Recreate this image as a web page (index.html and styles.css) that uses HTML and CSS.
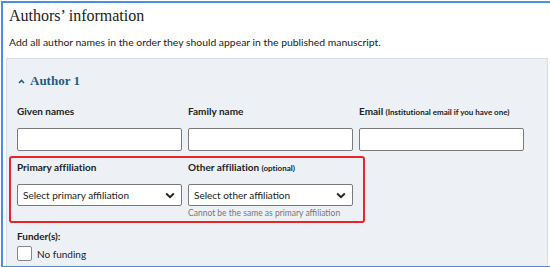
FILE: index.html
```html
<!DOCTYPE html>
<html lang="en">
<head>
    <meta charset="UTF-8">
    <meta name="viewport" content="width=device-width, initial-scale=1.0">
    <title>Authors' information</title>
    <link rel="stylesheet" href="styles.css">
</head>
<body>
    <div class="frame">
        <h2 class="page-title">Authors’ information</h2>
        <p class="intro">Add all author names in the order they should appear in the published manuscript.</p>

        <div class="author-panel">
            <h3 class="author-title">
                <svg class="caret" width="7" height="5" viewBox="0 0 7 5"><path d="M1 4 L3.5 1.5 L6 4" fill="none" stroke="currentColor" stroke-width="1.6"/></svg>
                Author 1
            </h3>

            <div class="field-row">
                <div class="field">
                    <label for="given">Given names</label>
                    <input type="text" id="given">
                </div>
                <div class="field">
                    <label for="family">Family name</label>
                    <input type="text" id="family">
                </div>
                <div class="field">
                    <label for="email">Email <small>(Institutional email if you have one)</small></label>
                    <input type="text" id="email">
                </div>
            </div>

            <div class="field-row affil-row">
                <div class="highlight"></div>
                <div class="field">
                    <label for="primary">Primary affiliation</label>
                    <div class="select">
                        <span>Select primary affiliation</span>
                        <svg width="10" height="7" viewBox="0 0 10 7"><path d="M1.2 1.5 L5 5.2 L8.8 1.5" fill="none" stroke="#222" stroke-width="1.9"/></svg>
                    </div>
                </div>
                <div class="field">
                    <label for="other">Other affiliation <small>(optional)</small></label>
                    <div class="select">
                        <span>Select other affiliation</span>
                        <svg width="10" height="7" viewBox="0 0 10 7"><path d="M1.2 1.5 L5 5.2 L8.8 1.5" fill="none" stroke="#222" stroke-width="1.9"/></svg>
                    </div>
                    <div class="hint">Cannot be the same as primary affiliation</div>
                </div>
            </div>

            <div class="funders">
                <div class="funders-label">Funder(s):</div>
                <label class="check"><span class="box"></span>No funding</label>
            </div>
        </div>
    </div>
</body>
</html>
```

FILE: styles.css
```css
html, body {
    margin: 0;
    background-color: #fff;
}
body {
    font-family: Lato, "Noto Sans", sans-serif;
    color: #222;
    overflow: hidden;
}
.frame {
    margin: 1px;
    width: 542px;
    height: 263px;
    border: 2px solid #4a90dc;
    padding: 0 3px;
    overflow: hidden;
}
.page-title {
    font-family: "Liberation Serif", serif;
    font-weight: normal;
    font-size: 16px;
    margin: 3px 0 0 3px;
    line-height: 20px;
    color: #222;
}
.intro {
    font-size: 10.4px;
    margin: 10px 0 0 3px;
    line-height: 12px;
}
.author-panel {
    margin-top: 10px;
    background-color: #edf1f5;
    border: 1px solid #d5dde5;
    padding: 14px 10px 20px;
}
.author-title {
    margin: 0;
    font-family: "Liberation Serif", serif;
    font-size: 13px;
    line-height: 16px;
    color: #1f5c86;
    display: flex;
    align-items: center;
    gap: 5px;
    padding-left: 1px;
}
.field-row {
    display: grid;
    grid-template-columns: repeat(3, 165px);
    column-gap: 6px;
    margin-top: 16px;
}
.field label {
    display: block;
    font-size: 10px;
    font-weight: bold;
    height: 12px;
    line-height: 12px;
    margin-bottom: 11px;
    font-variant-ligatures: none;
}
.field label small {
    font-size: 8px;
    line-height: 1;
}
.field input {
    display: block;
    box-sizing: border-box;
    width: 100%;
    height: 23px;
    margin: 0;
    border: 1px solid #7a7a7a;
    border-radius: 2px;
    background-color: #fff;
}
.affil-row {
    position: relative;
    margin-top: 10px;
}
.highlight {
    position: absolute;
    left: -8px;
    top: -5px;
    width: 352px;
    height: 63px;
    border: 2px solid #e8262a;
    border-radius: 3px;
    pointer-events: none;
}
.select {
    box-sizing: border-box;
    height: 22px;
    border: 1px solid #7a7a7a;
    border-radius: 2px;
    background-color: #fff;
    display: flex;
    align-items: center;
    justify-content: space-between;
    padding: 0 6px 0 5px;
    font-size: 10px;
}
.hint {
    font-size: 8.5px;
    color: #777;
    margin-top: 2px;
    line-height: 10px;
}
.funders {
    margin-top: 12px;
}
.funders-label {
    font-size: 10px;
    font-weight: bold;
    line-height: 12px;
}
.check {
    display: flex;
    align-items: center;
    gap: 5px;
    font-size: 10px;
    margin-top: 4px;
}
.box {
    width: 13px;
    height: 13px;
    border: 1px solid #888;
    border-radius: 2px;
    background-color: #fff;
}
```
